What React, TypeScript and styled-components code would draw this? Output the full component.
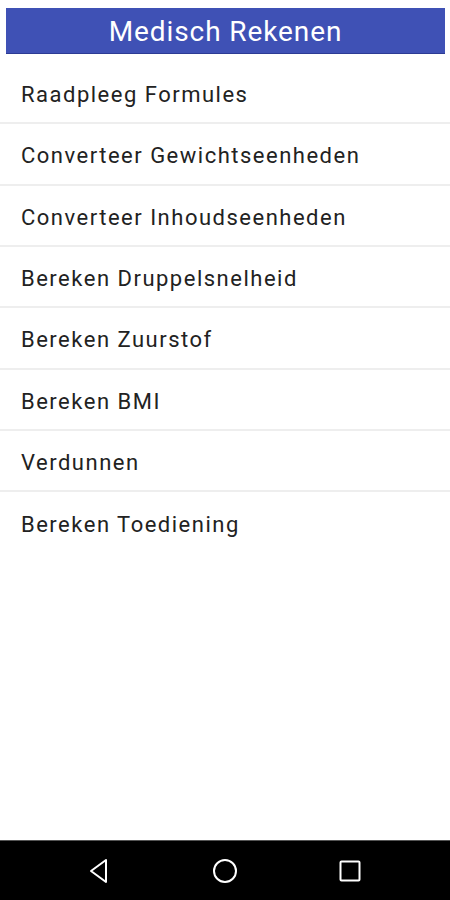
import styled, { createGlobalStyle } from 'styled-components'

const GlobalStyle = createGlobalStyle`
  html, body {
    margin: 0;
    padding: 0;
    background: #ffffff;
  }
  body {
    font-family: Roboto, "Noto Sans", sans-serif;
  }
`

const Screen = styled.div`
  width: 450px;
  height: 900px;
  display: flex;
  flex-direction: column;
  background: #ffffff;
  overflow: hidden;
`

const Content = styled.div`
  flex: 1;
  display: flex;
  flex-direction: column;
  padding: 8px 0 0;
`

const Header = styled.div`
  margin: 0 5px 9px 6px;
  height: 46px;
  display: flex;
  align-items: center;
  justify-content: center;
  background: #3f51b5;
  border-bottom: 1px solid #2c3b94;
  box-sizing: border-box;
  color: #ffffff;
  font-size: 28px;
  letter-spacing: 0.9px;
  line-height: 1;
  padding-top: 3px;
`

const Menu = styled.ul`
  list-style: none;
  margin: 0;
  padding: 0;
`

const Item = styled.li<{ $last?: boolean }>`
  height: 61.33px;
  box-sizing: border-box;
  display: flex;
  align-items: center;
  padding: 4px 0 0 21px;
  border-bottom: ${p => (p.$last ? 'none' : '2px solid #eeeeee')};
  color: #222222;
  font-size: 22px;
  letter-spacing: 1.5px;
`

const NavBar = styled.div`
  height: 60px;
  background: #000000;
  border-top: 1px solid #555555;
  box-sizing: border-box;
  display: flex;
  align-items: center;
  justify-content: space-between;
  padding: 0 78px 0 77px;
`

const NavButton = styled.div`
  width: 44px;
  height: 44px;
  display: flex;
  align-items: center;
  justify-content: center;
`

const items = [
  'Raadpleeg Formules',
  'Converteer Gewichtseenheden',
  'Converteer Inhoudseenheden',
  'Bereken Druppelsnelheid',
  'Bereken Zuurstof',
  'Bereken BMI',
  'Verdunnen',
  'Bereken Toediening',
]

const App = () => {
  return (
    <Screen>
      <GlobalStyle />
      <Content>
        <Header>Medisch Rekenen</Header>
        <Menu>
          {items.map((label, i) => (
            <Item key={label} $last={i === items.length - 1}>
              {label}
            </Item>
          ))}
        </Menu>
      </Content>
      <NavBar>
        <NavButton>
          <svg width="24" height="26" viewBox="0 0 24 26">
            <path
              d="M19 2 L4 13 L19 24 Z"
              fill="none"
              stroke="#ffffff"
              strokeWidth="2"
              strokeLinejoin="round"
            />
          </svg>
        </NavButton>
        <NavButton>
          <svg width="26" height="26" viewBox="0 0 26 26">
            <circle cx="13" cy="13" r="11" fill="none" stroke="#ffffff" strokeWidth="2" />
          </svg>
        </NavButton>
        <NavButton>
          <svg width="24" height="24" viewBox="0 0 24 24">
            <rect x="2.5" y="2.5" width="19" height="19" rx="1" fill="none" stroke="#ffffff" strokeWidth="2" />
          </svg>
        </NavButton>
      </NavBar>
    </Screen>
  )
}

export default App
